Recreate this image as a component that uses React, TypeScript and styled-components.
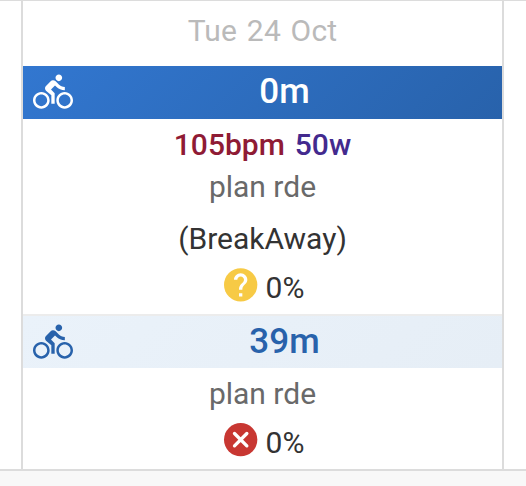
import React from "react";
import styled, { createGlobalStyle, css } from "styled-components";

const GlobalStyle = createGlobalStyle`
  * { box-sizing: border-box; }
  body { margin: 0; background: #f8f8f8; font-family: Roboto, sans-serif; overflow: hidden; }
`;

const Calendar = styled.div`
  height: 471px;
  display: grid;
  grid-template-columns: 23px 481px 1fr;
  background: #fff;
  border-top: 1px solid #dcdcdc;
  border-bottom: 2px solid #dcdcdc;
`;

const Day = styled.section`
  border-right: 2px solid #dcdcdc;
  &:last-child { border-right: 0; }
`;

const DateLabel = styled.header`
  height: 65px;
  padding-bottom: 7px;
  display: flex;
  align-items: center;
  justify-content: center;
  font-size: 30px;
  letter-spacing: 0.2px;
  word-spacing: 2px;
  color: #bababa;
`;

const Bar = styled.div<{ $planned?: boolean }>`
  display: flex;
  align-items: center;
  height: 53px;
  padding: 0 6px 2px 10px;
  color: #fff;
  background: linear-gradient(135deg, #3277d0, #2862ab);
  ${(p) =>
    p.$planned &&
    css`
      height: 54px;
      padding-bottom: 1px;
      color: #2862ab;
      border-top: 2px solid #ececec;
      background: linear-gradient(135deg, #eaf2fa, #e6eef6);
    `}
`;

const Duration = styled.div`
  flex: 1;
  text-align: center;
  font-size: 35px;
  line-height: 50px;
  font-weight: 500;
`;

const Details = styled.div<{ $height: number }>`
  height: ${(p) => p.$height}px;
  padding-top: 5px;
  display: flex;
  flex-direction: column;
  align-items: center;
  font-size: 30px;
  color: #333;
`;

const Metrics = styled.div`
  display: flex;
  gap: 10px;
  height: 42px;
  line-height: 42px;
  font-weight: 500;
`;

const Metric = styled.span<{ $color: string }>`
  color: ${(p) => p.$color};
`;

const Note = styled.div`
  height: 42px;
  line-height: 42px;
  color: #696969;
`;

const Name = styled.div`
  margin-top: 10px;
  height: 42px;
  line-height: 42px;
`;

const Compliance = styled.div<{ $top: number }>`
  display: flex;
  align-items: center;
  gap: 5px;
  height: 42px;
  margin-top: ${(p) => p.$top}px;
`;

const Percent = styled.span`
  line-height: 42px;
  padding-top: 5px;
`;

const Icon = styled.svg`
  display: block;
  flex: none;
  width: 40px;
  height: 40px;
  fill: currentColor;
`;

const Bike = () => (
  <Icon viewBox="0 0 24 24">
    <path d="M15.5 5.5c1.1 0 2-.9 2-2s-.9-2-2-2-2 .9-2 2 .9 2 2 2zM5 12c-2.8 0-5 2.2-5 5s2.2 5 5 5 5-2.2 5-5-2.2-5-5-5zm0 8.5c-1.9 0-3.5-1.6-3.5-3.5s1.6-3.5 3.5-3.5 3.5 1.6 3.5 3.5-1.6 3.5-3.5 3.5zm5.8-10l2.4-2.4.8.8c1.3 1.3 3 2.1 5.1 2.1V9c-1.5 0-2.7-.6-3.6-1.5l-1.9-1.9c-.5-.4-1-.6-1.6-.6s-1.1.2-1.4.6L7.8 8.4c-.4.4-.6.9-.6 1.4 0 .6.2 1.1.6 1.4L11 14v5h2v-6.2l-2.2-2.3zM19 12c-2.8 0-5 2.2-5 5s2.2 5 5 5 5-2.2 5-5-2.2-5-5-5zm0 8.5c-1.9 0-3.5-1.6-3.5-3.5s1.6-3.5 3.5-3.5 3.5 1.6 3.5 3.5-1.6 3.5-3.5 3.5z" />
  </Icon>
);

const StatusIcon = styled(Icon)<{ $color: string }>`
  color: ${(p) => p.$color};
`;

const Unknown = () => (
  <StatusIcon $color="#f7ca45" viewBox="0.2 0.1 24 24">
    <circle cx="12" cy="12" r="10" />
    <path
      fill="#fff"
      d="M11 19h2v-2h-2zM15.07 11.25l-.9.92C13.45 12.9 13 13.5 13 15h-2v-.5c0-1.1.45-2.1 1.17-2.83l1.24-1.26c.37-.36.59-.86.59-1.41 0-1.1-.9-2-2-2s-2 .9-2 2H8c0-2.21 1.79-4 4-4s4 1.79 4 4c0 .88-.36 1.68-.93 2.25z"
    />
  </StatusIcon>
);

const Missed = () => (
  <StatusIcon $color="#c83732" viewBox="0.2 0.2 24 24">
    <circle cx="12" cy="12" r="10" />
    <path fill="none" stroke="#fff" strokeWidth="2" strokeLinecap="round" d="M8.3 8.3l7.4 7.4M15.7 8.3l-7.4 7.4" />
  </StatusIcon>
);

export default function App() {
  return (
    <>
      <GlobalStyle />
      <Calendar>
        <Day />
        <Day>
          <DateLabel>Tue 24 Oct</DateLabel>
          <Bar>
            <Bike />
            <Duration>0m</Duration>
          </Bar>
          <Details $height={195}>
            <Metrics>
              <Metric $color="#8f1b35">105bpm</Metric>
              <Metric $color="#432a8e">50w</Metric>
            </Metrics>
            <Note>plan rde</Note>
            <Name>(BreakAway)</Name>
            <Compliance $top={4}>
              <Unknown />
              <Percent>0%</Percent>
            </Compliance>
          </Details>
          <Bar $planned>
            <Bike />
            <Duration>39m</Duration>
          </Bar>
          <Details $height={101}>
            <Note>plan rde</Note>
            <Compliance $top={4}>
              <Missed />
              <Percent>0%</Percent>
            </Compliance>
          </Details>
        </Day>
        <Day />
      </Calendar>
    </>
  );
}
